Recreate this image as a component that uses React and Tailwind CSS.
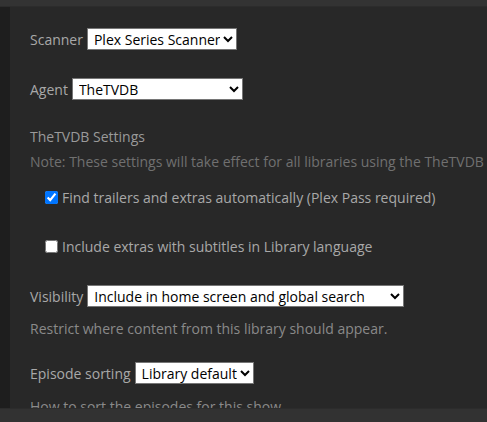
import React from 'react';

// one labelled dropdown row
const SelectRow = ({ label, value, options, width }) => (
  <div className="flex items-center h-[22px] gap-[4px]">
    <span className="text-[#a8a8a8]">{label}</span>
    <select
      defaultValue={value}
      className={`h-[22px] ${width} bg-white text-black border border-[#767676] text-[14px] pl-[2px]`}
    >
      {options.map((o) => (
        <option key={o}>{o}</option>
      ))}
    </select>
  </div>
);

const App = () => {
  return (
    <div
      className="w-[487px] h-[422px] flex flex-col overflow-hidden bg-[#282828] text-[14px]"
      style={{ fontFamily: '"Open Sans", "Noto Sans", sans-serif' }}
    >
      {/* top bar */}
      <div className="h-[7px] bg-[#333333] border-b border-[#2c2c2c] shrink-0" />

      <div className="flex flex-1 min-h-0">
        {/* left strip */}
        <div className="w-[10px] bg-[#1e1e1e] shrink-0" />

        {/* settings */}
        <div className="flex-1 min-w-0 overflow-hidden pl-[20px] pt-[21px] whitespace-nowrap">
          <SelectRow label="Scanner" value="Plex Series Scanner" options={['Plex Series Scanner']} width="w-[150px]" />

          <div className="mt-[28px]">
            <SelectRow label="Agent" value="TheTVDB" options={['TheTVDB']} width="w-[171px]" />
          </div>

          <div className="mt-[27px] h-[20px] leading-[20px] text-[14px] text-[#9a9a9a]">TheTVDB Settings</div>
          <div className="mt-[6px] h-[18px] leading-[18px] text-[#707070]">
            Note: These settings will take effect for all libraries using the TheTVDB agent.
          </div>

          <label className="mt-[16px] pl-[15px] h-[20px] flex items-center gap-[4px] text-[#a8a8a8]">
            <input type="checkbox" defaultChecked className="w-[13px] h-[13px] m-0" />
            <span>Find trailers and extras automatically (Plex Pass required)</span>
          </label>

          <label className="mt-[29px] pl-[15px] h-[20px] flex items-center gap-[4px] text-[#a8a8a8]">
            <input type="checkbox" className="w-[13px] h-[13px] m-0" />
            <span>Include extras with subtitles in Library language</span>
          </label>

          <div className="mt-[29px]">
            <SelectRow
              label="Visibility"
              value="Include in home screen and global search"
              options={['Include in home screen and global search']}
              width="w-[317px]"
            />
          </div>
          <div className="mt-[13px] h-[18px] leading-[18px] text-[#8a8a8a]">
            Restrict where content from this library should appear.
          </div>

          <div className="mt-[24px]">
            <SelectRow label="Episode sorting" value="Library default" options={['Library default']} width="w-[119px]" />
          </div>
          <div className="mt-[14px] h-[18px] leading-[18px] text-[#8a8a8a]">How to sort the episodes for this show.</div>
        </div>
      </div>

      {/* bottom bar */}
      <div className="h-[14px] bg-[#323232] border-t border-[#2c2c2c] shrink-0" />
    </div>
  );
};

export default App;
